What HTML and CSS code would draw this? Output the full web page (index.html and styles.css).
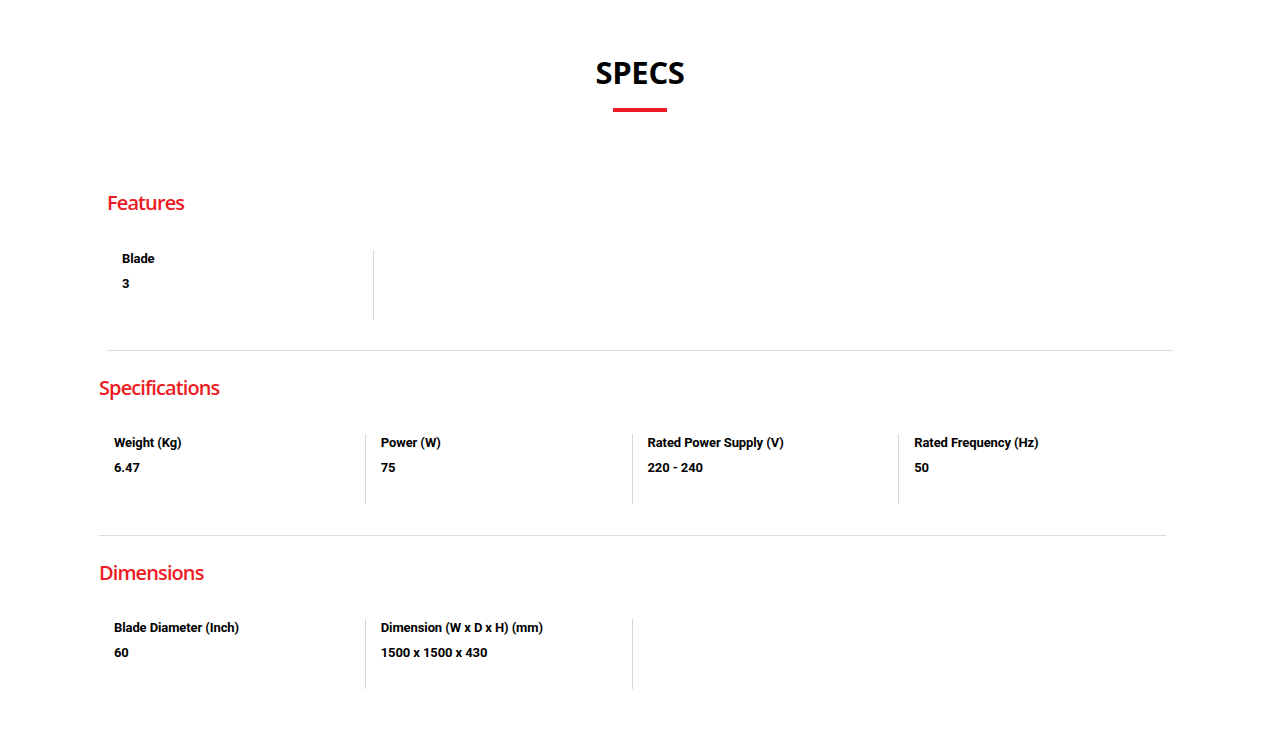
FILE: index.html
```html
<!DOCTYPE html>
<html lang="en">
<head>
<meta charset="utf-8">
<title>Specs</title>
<link rel="stylesheet" href="styles.css">
</head>
<body>
<main class="specs">
  <header class="specs-head">
    <h2 class="specs-title">SPECS</h2>
    <span class="specs-bar"></span>
  </header>

  <section class="group group--shift">
    <h3 class="group-title">Features</h3>
    <div class="grid">
      <div class="cell">
        <div class="cell-label">Blade</div>
        <div class="cell-value">3</div>
      </div>
    </div>
  </section>

  <section class="group">
    <h3 class="group-title">Specifications</h3>
    <div class="grid">
      <div class="cell">
        <div class="cell-label">Weight (Kg)</div>
        <div class="cell-value">6.47</div>
      </div>
      <div class="cell">
        <div class="cell-label">Power (W)</div>
        <div class="cell-value">75</div>
      </div>
      <div class="cell">
        <div class="cell-label">Rated Power Supply (V)</div>
        <div class="cell-value">220 - 240</div>
      </div>
      <div class="cell cell--last">
        <div class="cell-label">Rated Frequency (Hz)</div>
        <div class="cell-value">50</div>
      </div>
    </div>
  </section>

  <section class="group group--last">
    <h3 class="group-title">Dimensions</h3>
    <div class="grid">
      <div class="cell">
        <div class="cell-label">Blade Diameter (Inch)</div>
        <div class="cell-value">60</div>
      </div>
      <div class="cell">
        <div class="cell-label">Dimension (W x D x H) (mm)</div>
        <div class="cell-value">1500 x 1500 x 430</div>
      </div>
    </div>
  </section>
</main>
</body>
</html>
```

FILE: styles.css
```css
* { box-sizing: border-box; }

html, body {
  margin: 0;
  padding: 0;
  background: #fff;
}

body {
  font-family: "Roboto", "Liberation Sans", sans-serif;
  color: #000;
}

.specs {
  width: 1067px;
  margin: 0 auto 0 99px;
  padding-top: 54px;
}

.specs-head {
  display: flex;
  flex-direction: column;
  align-items: center;
  margin-left: -99px;
  width: 1280px;
}

.specs-title {
  margin: 0;
  font-family: "Open Sans", "Liberation Sans", sans-serif;
  font-weight: 700;
  font-size: 31px;
  line-height: 36px;
  letter-spacing: -0.3px;
}

.specs-bar {
  display: block;
  width: 54px;
  height: 4px;
  margin-top: 18px;
  background: #ed1c24;
}

.group {
  padding-top: 25px;
  padding-bottom: 31px;
  border-bottom: 1px solid #dcdcdc;
}

.group--shift {
  margin-left: 8px;
  margin-right: -7px;
  padding-top: 79px;
  padding-bottom: 30px;
}

.group--last {
  border-bottom: none;
}

.group-title {
  margin: 0;
  color: #ed1c24;
  font-family: "Open Sans", "Liberation Sans", sans-serif;
  font-weight: 600;
  font-size: 20px;
  line-height: 24px;
  letter-spacing: -0.9px;
}

.grid {
  display: grid;
  grid-template-columns: repeat(4, 1fr);
  margin-top: 34px;
}

.group--shift .grid {
  margin-top: 35px;
}

.cell {
  height: 70px;
  padding: 0 15px;
  border-right: 1px solid #d6d6d6;
}

.cell--last {
  border-right: none;
}

.cell-label,
.cell-value {
  font-size: 13px;
  font-weight: 700;
  line-height: 18px;
  letter-spacing: -0.1px;
}

.cell-value {
  margin-top: 7px;
}
```
